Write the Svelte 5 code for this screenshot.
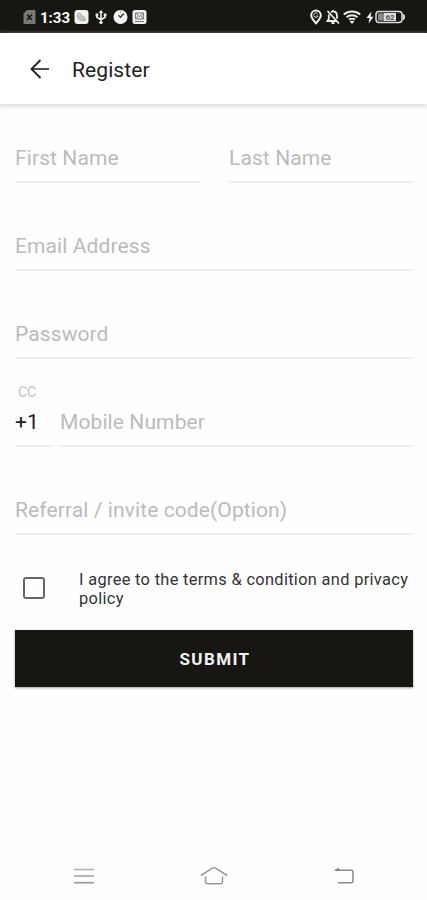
<script lang="ts">
	let firstName = $state('');
	let lastName = $state('');
	let email = $state('');
	let password = $state('');
	let countryCode = $state('+1');
	let mobile = $state('');
	let referral = $state('');
	let agreed = $state(false);
</script>

<div class="screen">
	<div class="status">
		<div class="status-left">
			<svg width="13" height="16" viewBox="0 0 13 16">
				<path d="M4 1h7.500a1 1 0 0 1 1 1v12a1 1 0 0 1-1 1h-10a1 1 0 0 1-1-1V4.500z" fill="#777" />
				<path d="M4.200 5.500l4.600 5.500M8.800 5.500l-4.600 5.500" stroke="#171613" stroke-width="1.500" />
			</svg>
			<span class="time">1:33</span>
			<svg class="app" width="15" height="16" viewBox="0 0 15 16">
				<rect x=".5" y="1" width="14" height="14" rx="3" fill="#f1f1f1" />
				<path d="M4 4.500c2-1 3.500 .3 3.500 2.500 2 0 4 1.500 4 4-2 1-5 1-7-1-1.500-1.500-1.500-3-.5-5.500z" fill="#d0d0d0" stroke="#999" stroke-width=".8" />
				<path d="M4.500 7.500l6 3.500" stroke="#999" stroke-width=".8" />
			</svg>
			<svg class="usb" width="12" height="16" viewBox="0 0 12 16" fill="none" stroke="#eee" stroke-width="1.600">
				<path d="M6 3v10M1.900 6v2.200L6 10.800l4.100-2.600V6" />
				<path d="M6 .7L8.200 4H3.800zM.6 4.600h2.700V7.200H.6zM8.700 4.600h2.700V7.200H8.700z" fill="#eee" stroke="none" />
				<circle cx="6" cy="13.400" r="1.700" fill="#eee" stroke="none" />
			</svg>
			<svg class="clock" width="15" height="16" viewBox="0 0 15 16">
				<circle cx="7.500" cy="8" r="7" fill="#f7f7f7" />
				<path d="M5.500 6.300l2 2 3.300-3.800" fill="none" stroke="#333" stroke-width="1.400" />
				<path d="M7.500 2v1.500" stroke="#888" />
			</svg>
			<svg class="mail" width="15" height="16" viewBox="0 0 15 16">
				<rect x=".5" y="1" width="14" height="14" rx="2.500" fill="#f0f0f0" />
				<path d="M3.500 4h8v6h-8zM3.500 4l4 3.500 4-3.500M3.500 10l2.700-3M11.500 10L8.800 7M3 12.500h9" fill="none" stroke="#777" stroke-width="1" />
			</svg>
		</div>
		<div class="status-right">
			<svg width="12" height="16" viewBox="0 0 12 16">
				<path d="M6 14.300C3.500 11.500 1.200 9.200 1.200 6.300a4.800 4.800 0 0 1 9.600 0C10.800 9.200 8.500 11.500 6 14.300z" fill="none" stroke="#eee" stroke-width="2" />
				<path d="M7.800 5a2.200 2.200 0 1 0 .2 2H6" fill="none" stroke="#ddd" stroke-width="1" />
			</svg>
			<svg class="bell" width="14" height="16" viewBox="0 0 14 16" fill="none" stroke="#eee" stroke-width="1.800">
				<path d="M5 3.200c3-2 6 0 6 3.500v3M2.800 5.500V10L1.500 12h8.800M5.500 14h3M7 1v1.500M1.500 2l11.500 12.500" />
			</svg>
			<svg class="wifi" width="18" height="16" viewBox="0 0 18 16" fill="none" stroke="#e8e8e8" stroke-width="2.100">
				<path d="M.8 5.500c4.600-4 11.800-4 16.400 0M3.500 8.200c3-2.700 8-2.700 11 0M6.100 10.800c1.600-1.400 4.200-1.400 5.800 0" />
				<path d="M9 15l-2.300-2.500c1.200-1 3.400-1 4.600 0z" fill="#eee" stroke="none" />
			</svg>
			<svg class="bolt" width="8" height="16" viewBox="0 0 8 16">
				<path d="M5.500 2.500L.5 9h3l-1 5.500 5-6.800h-3z" fill="#fff" />
			</svg>
			<svg width="31" height="16" viewBox="0 0 31 16">
				<rect x="1" y="2.500" width="26" height="11" rx="3" fill="#171613" stroke="#ddd" stroke-width="1.500" />
				<path d="M28.300 5c1.600.7 1.600 5.300 0 6z" fill="#ddd" stroke="#ddd" />
				<path d="M3 4.300h17v7.400H3z" fill="#888" />
				<rect x="9" y="4" width="12" height="8" fill="#ddd" />
				<text x="15" y="11" text-anchor="middle" class="level">62</text>
			</svg>
		</div>
	</div>

	<header>
		<button class="back" aria-label="Back">
			<svg width="20" height="20" viewBox="0 0 20 20" fill="none" stroke="#222">
				<path d="M10.500 1L1.500 10l9 9" stroke-width="1.900" />
				<path d="M2 10h17" stroke-width="1.600" />
			</svg>
		</button>
		<h1>Register</h1>
	</header>

	<form>
		<div class="row names">
			<label class="field"><input placeholder="First Name" bind:value={firstName} /></label>
			<label class="field"><input placeholder="Last Name" bind:value={lastName} /></label>
		</div>
		<div class="row">
			<label class="field"><input placeholder="Email Address" bind:value={email} /></label>
		</div>
		<div class="row">
			<label class="field"><input type="password" placeholder="Password" bind:value={password} /></label>
		</div>
		<div class="row phone">
			<label class="field code">
				<span>CC</span>
				<input bind:value={countryCode} />
			</label>
			<label class="field"><input placeholder="Mobile Number" bind:value={mobile} /></label>
		</div>
		<div class="row">
			<label class="field"><input placeholder="Referral / invite code(Option)" bind:value={referral} /></label>
		</div>

		<label class="terms">
			<input type="checkbox" bind:checked={agreed} />
			<span>I agree to the terms &amp; condition and privacy policy</span>
		</label>

		<button type="button" class="submit">SUBMIT</button>
	</form>

	<nav>
		<svg width="20" height="18" viewBox="0 0 20 18" stroke="#999" stroke-width="1.700">
			<path d="M0 2.500h20" stroke="#b5b5b5" />
			<path d="M0 9h20" stroke="#aaa" />
			<path d="M0 15.700h20" />
		</svg>
		<svg width="28" height="20" viewBox="0 0 28 20" fill="none" stroke="#999" stroke-width="1.500">
			<path d="M.8 9.500L12 2.300q2-1.100 4 0L27.200 9.500" />
			<path d="M5.500 10.500v5q0 2.300 2.300 2.300h12.400q2.300 0 2.300-2.300v-5" />
		</svg>
		<svg width="20" height="18" viewBox="0 0 20 18" fill="none" stroke="#888" stroke-width="1.500">
			<path d="M1 3.200h16q2 0 2 2v8.600q0 2-2 2H4" />
			<path d="M0 3.500L5 .7v3z" fill="#777" stroke="none" />
		</svg>
	</nav>
</div>

<style>
	:global(body) {
		margin: 0;
		background: #fefefe;
	}
	.screen {
		display: flex;
		flex-direction: column;
		width: 427px;
		height: 900px;
		overflow: hidden;
		background: #fefefe;
		font-family: Roboto, sans-serif;
	}
	svg {
		display: block;
		flex: none;
	}
	.status {
		display: flex;
		justify-content: space-between;
		box-sizing: border-box;
		height: 33px;
		padding: 9px 21px 0 23px;
		background: #171613;
		border-bottom: 1px solid #000;
	}
	.status-left,
	.status-right {
		display: flex;
		height: 16px;
		align-items: center;
	}
	.time {
		width: 31px;
		margin: 1px 3px 0 4px;
		color: #fff;
		font-size: 15px;
		font-weight: 700;
		line-height: 16px;
	}
	.usb {
		margin-left: 6px;
	}
	.clock {
		margin-left: 6px;
	}
	.mail {
		margin-left: 4px;
	}
	.bell {
		margin-left: 4px;
	}
	.wifi {
		margin-left: 3px;
	}
	.bolt {
		margin: 0 1px 0 5px;
	}
	.level {
		fill: #555;
		font-size: 8px;
		font-weight: 700;
	}
	header {
		display: flex;
		align-items: center;
		flex: none;
		height: 71px;
		padding-left: 30px;
		background: #fff;
		box-shadow: 0 2px 4px 1px #e2e2e2;
	}
	.back {
		padding: 0;
		border: 0;
		background: none;
	}
	h1 {
		margin: 2px 0 0 22px;
		color: #222;
		font-size: 21px;
		font-weight: 400;
		line-height: 26px;
		letter-spacing: 0.1px;
	}
	form {
		display: flex;
		flex-direction: column;
		padding: 0 14px 0 15px;
	}
	.row {
		display: flex;
		align-items: flex-end;
		height: 88px;
	}
	.names {
		height: 79px;
		gap: 29px;
		margin-right: -1px;
	}
	.phone {
		gap: 7px;
	}
	.field {
		display: flex;
		flex-direction: column;
		flex: 1;
		min-width: 0;
		border-bottom: 2px solid #efefef;
	}
	.field input {
		width: 100%;
		height: 46px;
		padding: 0;
		border: 0;
		outline: 0;
		background: none;
		color: #222;
		font: 400 21px Roboto, sans-serif;
		letter-spacing: 0.1px;
	}
	.field input::placeholder {
		color: #bbb;
		opacity: 1;
	}
	.code {
		flex: 0 0 38px;
	}
	.code span {
		height: 12px;
		padding-left: 3px;
		color: #c4c4c4;
		font-size: 14px;
		line-height: 10px;
	}
	.terms {
		display: flex;
		height: 95px;
		box-sizing: border-box;
		padding: 35px 0 0 8px;
	}
	.terms input {
		appearance: none;
		flex: none;
		width: 22px;
		height: 22px;
		margin: 7px 34px 0 0;
		border: 2px solid #666;
		border-radius: 3px;
	}
	.terms span {
		margin-right: -4px;
		color: #333;
		font-size: 16.4px;
		line-height: 19px;
		letter-spacing: 0.32px;
	}
	.submit {
		height: 57px;
		padding: 1px 0 0 2px;
		border: 0;
		background: #171613;
		box-shadow: 0 1px 2px #999;
		color: #f2f2f2;
		font: 700 17px Roboto, sans-serif;
		letter-spacing: 1.4px;
	}
	nav {
		display: flex;
		justify-content: space-between;
		align-items: center;
		height: 20px;
		margin: auto 73px 14px 74px;
	}
</style>
